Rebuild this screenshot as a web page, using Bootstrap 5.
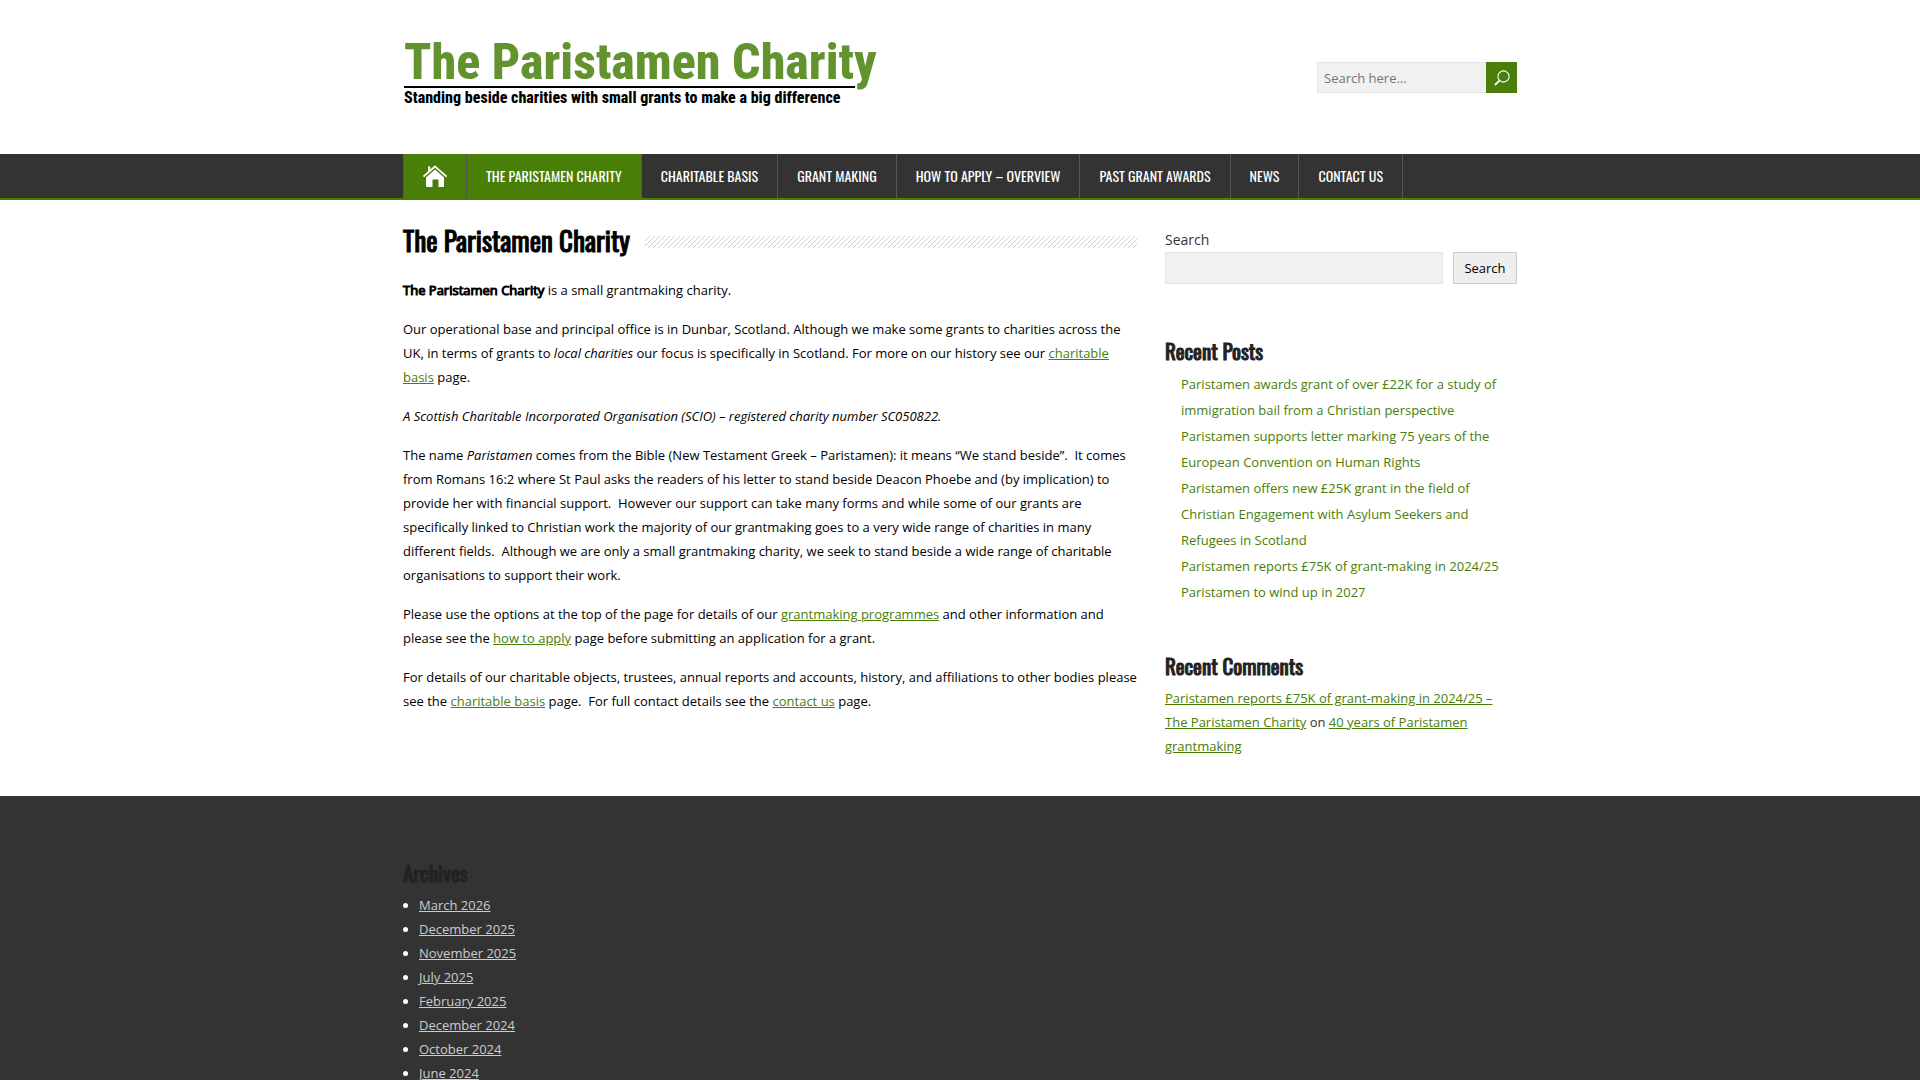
<!DOCTYPE html>
<html lang="en">
<head>
<meta charset="utf-8">
<meta name="viewport" content="width=device-width, initial-scale=1">
<title>The Paristamen Charity</title>
<link href="https://cdn.jsdelivr.net/npm/bootstrap@5.3.0/dist/css/bootstrap.min.css" rel="stylesheet">
<style>
:root { --leaf: #497e08; --coal: #333333; --narrow: Oswald, "Roboto Condensed", "Liberation Sans", sans-serif; }
body { font-family: "Open Sans", sans-serif; font-size: 13px; line-height: 24px; color: #000; background: #fff; }
a { color: var(--leaf); }
a:hover { color: #2f5205; }
.wrap { max-width: 1114px; margin-inline: auto; }
.masthead { padding: 39px 0 38px; }
.brand { color: #000; font-family: "Roboto Condensed", Oswald, sans-serif; font-weight: 800; padding-left: 1px; }
.brand-name { color: #62932f; font-size: 50px; line-height: 47px; }
.brand-line { border-top: 2px solid #000; font-size: 16px; line-height: 20px; height: 30px; margin-right: 22px; }
.finder { width: 200px; height: 31px; }
.finder input, .side-search input { background: #f1f1f1; border: 1px solid #e4e4e4; border-radius: 0; font-size: 13px; color: #777; min-width: 0; }
.finder input { padding: 0 6px; border-right: 0; }
.finder input::placeholder { color: #757575; opacity: 1; }
.finder button { width: 31px; background: var(--leaf); border: 0; color: #fff; flex: none; }
.mainbar { background: var(--coal); border-bottom: 2px solid var(--leaf); }
.menu { border-left: 1px solid #555; }
.menu .nav-link { height: 44px; line-height: 44px; padding: 0 19px; color: #fff; font-family: var(--narrow); font-size: 14px; text-transform: uppercase; border-right: 1px solid #555; border-radius: 0; }
.menu .nav-link.active, .menu .nav-link:hover { background: var(--leaf); }
.columns { gap: 28px; padding-top: 20px; padding-bottom: 38px; }
.side { width: 352px; flex: none; color: #333; }
.content p { margin-bottom: 15px; }
.title-row { margin-bottom: 18px; }
.title { font-family: var(--narrow); font-weight: 400; -webkit-text-stroke: 1px currentColor; font-size: 27px; line-height: 40px; margin: 0; }
.hatch { height: 12px; margin: 4px 0 0 15px; }
.fake-bold { font-weight: 400; -webkit-text-stroke: 1px #000; }
.side-title { font-family: var(--narrow); font-weight: 400; -webkit-text-stroke: 1px currentColor; font-size: 21px; line-height: 32px; margin: 0 0 4px; color: #222; }
.side-search { margin-bottom: 51px; }
.side-search label { font-size: 14px; line-height: 24px; margin: 8px 0 0; }
.side-search .controls { gap: 10px; height: 32px; }
.side-search button { background: #eee; border: 1px solid #ccc; color: #000; width: 64px; flex: none; padding: 0; }
.posts { padding-left: 16px; margin: 0 0 45px; line-height: 26px; }
.posts a { text-decoration: none; }
.foot { background: var(--coal); color: #fff; padding: 61px 0 40px; }
.foot ul { padding-left: 16px; margin: 0; }
.foot a { color: #ccc; }
</style>
<script src="https://cdn.jsdelivr.net/npm/bootstrap@5.3.0/dist/js/bootstrap.bundle.min.js" defer></script>
</head>
<body>
<header>
  <div class="wrap masthead d-flex justify-content-between">
    <a class="brand d-block text-decoration-none" href="#">
      <div class="brand-name">The Paristamen Charity</div>
      <div class="brand-line">Standing beside charities with small grants to make a big difference</div>
    </a>
    <form class="finder d-flex align-self-center" role="search">
      <input class="flex-grow-1" type="text" placeholder="Search here..." aria-label="Search here">
      <button type="submit" class="d-flex align-items-center justify-content-center p-0" aria-label="Search">
        <svg width="16" height="16" viewBox="0 0 16 16" fill="none" stroke="currentColor"><circle cx="9.5" cy="6.5" r="5.6" stroke-width="1.1"/><path d="M5.4 10.6 1 15" stroke-width="1.8"/></svg>
      </button>
    </form>
  </div>
  <nav class="mainbar" aria-label="Main">
    <div class="wrap">
      <ul class="nav menu">
        <li class="nav-item"><a class="nav-link active d-flex align-items-center" href="#" aria-label="Home">
          <svg width="24" height="24" viewBox="0 0 24 24" fill="#fff"><path d="M5 2.500h2.300v3.200L5 7.800z"/><path d="M.5 12.500 12 2.500l11.500 10" fill="none" stroke="#fff" stroke-width="1.700"/><path d="M12 5.500 21 13.500v8.500q0 1-1 1h-4.500v-7.500h-6v7.500H4q-1 0-1-1v-8.500z"/></svg></a></li>
        <li class="nav-item"><a class="nav-link active" href="#">The Paristamen Charity</a></li>
        <li class="nav-item"><a class="nav-link" href="#">Charitable Basis</a></li>
        <li class="nav-item"><a class="nav-link" href="#">Grant Making</a></li>
        <li class="nav-item"><a class="nav-link" href="#">How to Apply – Overview</a></li>
        <li class="nav-item"><a class="nav-link" href="#">Past Grant Awards</a></li>
        <li class="nav-item"><a class="nav-link" href="#">News</a></li>
        <li class="nav-item"><a class="nav-link" href="#">Contact Us</a></li>
      </ul>
    </div>
  </nav>
</header>
<div class="wrap columns d-flex">
  <main class="content flex-grow-1">
    <div class="title-row d-flex align-items-center">
      <h1 class="title">The Paristamen Charity</h1>
      <svg class="hatch flex-grow-1" width="100" height="12" aria-hidden="true"><defs><pattern id="slashes" width="5" height="5" patternUnits="userSpaceOnUse"><path d="M-1 6 6 -1M-1 1 1 -1M4 6 6 4" stroke="#c4c4c4" stroke-width=".8"/></pattern></defs><rect width="100%" height="12" fill="url(#slashes)"/></svg>
    </div>
    <p><strong class="fake-bold">The Paristamen Charity</strong> is a small grantmaking charity.</p>
    <p>Our operational base and principal office is in Dunbar, Scotland. Although we make some grants to charities across the UK, in terms of grants to <em>local charities</em> our focus is specifically in Scotland. For more on our history see our <a href="#">charitable basis</a> page.</p>
    <p><em>A Scottish Charitable Incorporated Organisation (SCIO) – registered charity number SC050822.</em></p>
    <p>The name <em>Paristamen</em> comes from the Bible (New Testament Greek – Paristamen): it means “We stand beside”.&nbsp; It comes from Romans 16:2 where St Paul asks the readers of his letter to stand beside Deacon Phoebe and (by implication) to provide her with financial support.&nbsp; However our support can take many forms and while some of our grants are specifically linked to Christian work the majority of our grantmaking goes to a very wide range of charities in many different fields.&nbsp; Although we are only a small grantmaking charity, we seek to stand beside a wide range of charitable organisations to support their work.</p>
    <p>Please use the options at the top of the page for details of our <a href="#">grantmaking programmes</a> and other information and please see the <a href="#">how to apply</a> page before submitting an application for a grant.</p>
    <p>For details of our charitable objects, trustees, annual reports and accounts, history, and affiliations to other bodies please see the <a href="#">charitable basis</a> page.&nbsp; For full contact details see the <a href="#">contact us</a> page.</p>
  </main>
  <aside class="side">
    <form class="side-search" role="search">
      <label class="d-block" for="side-q">Search</label>
      <div class="controls d-flex"><input class="flex-grow-1" id="side-q" type="search"><button type="submit">Search</button></div>
    </form>
    <section>
      <h2 class="side-title">Recent Posts</h2>
      <ul class="posts list-unstyled">
        <li><a href="#">Paristamen awards grant of over £22K for a study of immigration bail from a Christian perspective</a></li>
        <li><a href="#">Paristamen supports letter marking 75 years of the European Convention on Human Rights</a></li>
        <li><a href="#">Paristamen offers new £25K grant in the field of Christian Engagement with Asylum Seekers and Refugees in Scotland</a></li>
        <li><a href="#">Paristamen reports £75K of grant-making in 2024/25</a></li>
        <li><a href="#">Paristamen to wind up in 2027</a></li>
      </ul>
    </section>
    <section>
      <h2 class="side-title">Recent Comments</h2>
      <div><a href="#">Paristamen reports £75K of grant-making in 2024/25 – The Paristamen Charity</a> on <a href="#">40 years of Paristamen grantmaking</a></div>
    </section>
  </aside>
</div>
<footer class="foot">
  <div class="wrap">
    <h2 class="side-title">Archives</h2>
    <ul>
      <li><a href="#">March 2026</a></li>
      <li><a href="#">December 2025</a></li>
      <li><a href="#">November 2025</a></li>
      <li><a href="#">July 2025</a></li>
      <li><a href="#">February 2025</a></li>
      <li><a href="#">December 2024</a></li>
      <li><a href="#">October 2024</a></li>
      <li><a href="#">June 2024</a></li>
    </ul>
  </div>
</footer>
</body>
</html>
